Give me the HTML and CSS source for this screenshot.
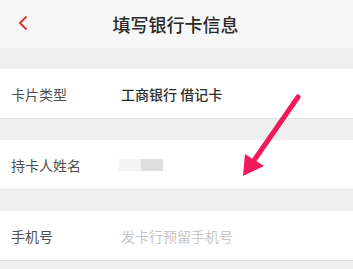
FILE: index.html
```html
<!DOCTYPE html>
<html lang="zh">
<head>
<meta charset="utf-8">
<link rel="stylesheet" href="styles.css">
</head>
<body>
<div class="page">
  <header class="bar">
    <span class="back">
      <svg width="12" height="16" viewBox="0 0 12 16"><path d="M9.5 1.5 L3 8 L9.5 14.5" fill="none" stroke="#d63a3a" stroke-width="2"/></svg>
    </span>
    <h1 class="title">填写银行卡信息</h1>
  </header>
  <div class="gap gap-first"></div>
  <div class="row">
    <span class="label">卡片类型</span>
    <span class="value">工商银行 借记卡</span>
  </div>
  <div class="gap"></div>
  <div class="row">
    <span class="label">持卡人姓名</span>
    <span class="blur"><i class="b1"></i><i class="b2"></i></span>
  </div>
  <div class="gap"></div>
  <div class="row">
    <span class="label">手机号</span>
    <span class="placeholder">发卡行预留手机号</span>
  </div>
  <svg class="arrow" width="80" height="100" viewBox="0 0 80 100">
    <path d="M60 5 L17 67" stroke="#f2195c" stroke-width="5" stroke-linecap="round" fill="none"/>
    <polygon points="5,84 7,62 26,74" fill="#f2195c"/>
  </svg>
</div>
</body>
</html>
```
FILE: styles.css
```css
* { box-sizing: border-box; margin: 0; padding: 0; }
body {
  width: 353px;
  height: 269px;
  overflow: hidden;
  background: #efefef;
  font-family: "Noto Sans CJK SC", "Noto Sans", sans-serif;
}
.page { position: relative; }
.bar {
  height: 49px;
  background: #f7f7f7;
  display: flex;
  align-items: center;
  justify-content: center;
  position: relative;
  border-bottom: 1px solid #ececec;
}
.back {
  position: absolute;
  left: 17px;
  top: 15px;
  display: flex;
}
.title {
  font-size: 18px;
  font-weight: 500;
  color: #2a2a2a;
  margin-left: -2px;
  margin-top: -1px;
}
.gap { height: 21px; }
.gap-first { height: 20px; }
.row {
  height: 50px;
  background: #fff;
  border-bottom: 1px solid #e2e2e2;
  display: flex;
  align-items: center;
  padding-left: 11px;
}
.label {
  width: 110px;
  font-size: 14px;
  color: #4f4f4f;
}
.value {
  font-size: 14px;
  font-weight: 500;
  color: #2e2e2e;
}
.placeholder {
  font-size: 14px;
  color: #c6c6c6;
}
.blur { display: flex; margin-left: -2px; }
.blur i { display: block; height: 12px; }
.b1 { width: 22px; background: #f3f3f3; }
.b2 { width: 22px; background: #dedede; }
.arrow {
  position: absolute;
  left: 238px;
  top: 92px;
}
```
